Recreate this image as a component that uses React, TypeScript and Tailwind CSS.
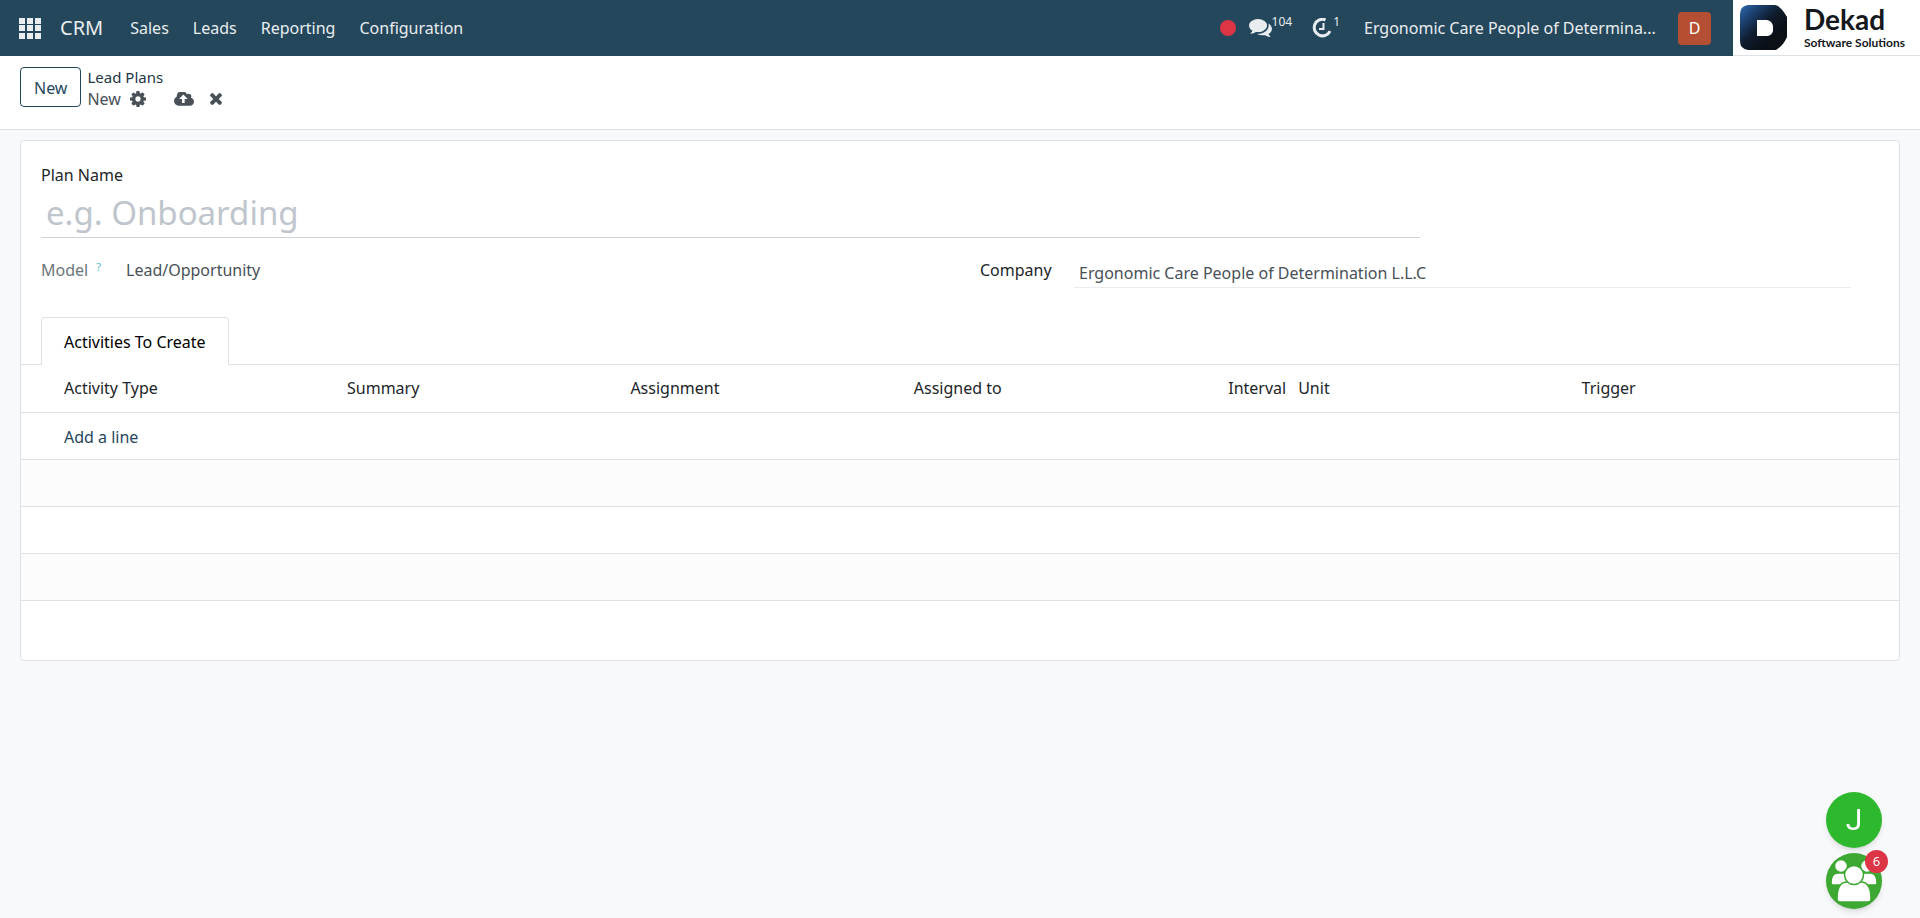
import { useState } from 'react';

const navItems = ['Sales', 'Leads', 'Reporting', 'Configuration'];

const GridIcon = () => (
  <svg viewBox="0 0 22 21" className="w-[22px] h-[21px]" fill="currentColor" aria-hidden="true">
    {[0, 8, 16].map((x) => [0, 7, 15].map((y) => <rect key={`${x}-${y}`} x={x} y={y} width="6" height="6" />))}
  </svg>
);

const CogIcon = () => (
  <svg viewBox="128 128 1536 1536" className="size-4" fill="currentColor" aria-hidden="true">
    <path d="M1152 896q0-106-75-181t-181-75-181 75-75 181 75 181 181 75 181-75 75-181zm512-109v222q0 12-8 23t-20 13l-185 28q-19 54-39 91 35 50 107 138 10 12 10 25t-9 23q-27 37-99 108t-94 71q-12 0-26-9l-138-108q-44 23-91 38-16 136-29 186-7 28-36 28h-222q-14 0-24.5-8.5t-11.5-21.5l-28-184q-49-16-90-37l-141 107q-10 9-25 9-14 0-25-11-126-114-165-168-7-10-7-23 0-12 8-23 15-21 51-66.5t54-70.5q-27-50-41-99l-183-27q-13-2-21-12.5t-8-23.5v-222q0-12 8-23t19-13l186-28q14-46 39-92-40-57-107-138-10-12-10-24 0-10 9-23 26-36 98.5-107.5t94.5-71.5q13 0 26 10l138 107q44-23 91-38 16-136 29-186 7-28 36-28h222q14 0 24.5 8.5t11.5 21.5l28 184q49 16 90 37l142-107q9-9 24-9 13 0 25 10 129 119 165 170 7 8 7 22 0 12-8 23-15 21-51 66.5t-54 70.5q26 50 41 98l183 28q13 2 21 12.5t8 23.5z" />
  </svg>
);

const CloudIcon = () => (
  <svg viewBox="-64 256 1920 1280" className="w-5 h-[14px]" fill="currentColor" aria-hidden="true">
    <path d="M1216 864q0-14-9-23l-352-352q-9-9-23-9t-23 9l-351 351q-10 12-10 24 0 14 9 23t23 9h224v352q0 13 9.500 22.500t22.500 9.500h192q13 0 22.500-9.500t9.500-22.500v-352h224q13 0 22.500-9.500t9.500-22.500zm640 288q0 159-112.500 271.500t-271.500 112.500h-1088q-185 0-316.500-131.500t-131.500-316.500q0-130 70-240t188-165q-2-30-2-43 0-212 150-362t362-150q156 0 285.500 87t188.500 231q71-62 166-62 106 0 181 75t75 181q0 76-41 138 130 31 213.500 135.500t83.500 238.500z" />
  </svg>
);

const TimesIcon = () => (
  <svg viewBox="302 366 1188 1188" className="size-3" fill="currentColor" aria-hidden="true">
    <path d="M1490 1322q0 40-28 68l-136 136q-28 28-68 28t-68-28l-294-294-294 294q-28 28-68 28t-68-28l-136-136q-28-28-28-68t28-68l294-294-294-294q-28-28-28-68t28-68l136-136q28-28 68-28t68 28l294 294 294-294q28-28 68-28t68 28l136 136q28 28 28 68t-28 68l-294 294 294 294q28 28 28 68z" />
  </svg>
);

const CommentsIcon = () => (
  <svg viewBox="0 256 1792 1408" className="w-[23px] h-[18px]" fill="currentColor" aria-hidden="true">
    <path d="M1408 768q0 139-94 257t-256.500 186.500-353.500 68.500q-86 0-176-16-124 88-278 128-36 9-86 16h-3q-11 0-20.500-8t-11.500-21q-1-3-1-6.500t.5-6.500 2-6l2.500-5 3.500-5.500 4-5 4.500-5 4-4.500q5-6 23-25t26-29.500 22.500-29 25-38.500 20.500-44q-124-72-195-177t-71-224q0-139 94-257t256.500-186.500 353.500-68.500 353.500 68.500 256.500 186.500 94 257zm384 256q0 120-71 224.500t-195 176.500q10 24 20.500 44t25 38.500 22.500 29 26 29.500 23 25q1 1 4 4.500t4.500 5 4 5 3.500 5.500l2.500 5 2 6 .5 6.500-1 6.500q-3 14-13 22t-22 7q-50-7-86-16-154-40-278-128-90 16-176 16-271 0-472-132 58 4 88 4 161 0 309-45t264-129q125-92 192-212t67-254q0-77-23-152 129 71 204 178t75 230z" />
  </svg>
);

const ClockIcon = () => (
  <svg viewBox="0 0 20 20" className="size-5" fill="none" stroke="currentColor" aria-hidden="true">
    <path d="M13.500 1.800A8.300 8.300 0 1 0 18 13.200" strokeWidth="3" />
    <path d="M11.500 5v6H7" strokeWidth="2" />
  </svg>
);

const DekadMark = () => (
  <svg viewBox="0 0 48 45" className="w-12 h-[45px]" aria-hidden="true">
    <defs>
      <linearGradient id="mark" x1="0" y1="0" x2="0.7" y2="0.7">
        <stop offset="0" stopColor="#2f6cb5" />
        <stop offset="0.3" stopColor="#1c4373" />
        <stop offset="0.65" stopColor="#0f1c2e" />
        <stop offset="1" stopColor="#0b1017" />
      </linearGradient>
    </defs>
    <path d="M8 0h27q6 1 12 12v20q-4 9-11 13H8q-8-1-8-9V9q0-8 8-9z" fill="url(#mark)" />
    <path d="M17 15h10q5 1 6 6v5q-1 4-5 5H17z" fill="#fff" />
  </svg>
);

const GroupIcon = () => (
  <svg viewBox="0 0 56 56" className="size-14" fill="#fff" stroke="#3da832" strokeWidth="1.500" aria-hidden="true">
    <path d="M5 30q0-10 7-10h5q6 0 6 8v4H7q-2 0-2-2z" />
    <circle cx="15" cy="13" r="6.500" />
    <path d="M51 30q0-10-7-10h-5q-6 0-6 8v4h16q2 0 2-2z" />
    <circle cx="41" cy="13" r="6.500" />
    <path d="M11 46q0-16 9-17h16q9 1 9 17 0 3-3 3H14q-3 0-3-3z" />
    <circle cx="28" cy="22" r="9.500" />
  </svg>
);

export default function App() {
  const [planName, setPlanName] = useState('');
  const [company, setCompany] = useState('Ergonomic Care People of Determination L.L.C');

  return (
    <div className="min-h-screen bg-[#f8f9fb] font-['Noto_Sans',sans-serif] text-[16px] leading-6 text-[#212529]">
      <header className="flex h-14 bg-[#25475c] text-[#e9edef]">
        <nav className="flex flex-1 items-center pl-[19px]">
          <button type="button" aria-label="Home menu" className="mr-[19px]">
            <GridIcon />
          </button>
          <a href="#" className="mr-[27px] text-[20px]">CRM</a>
          <div className="flex gap-6">
            {navItems.map((item) => (
              <a key={item} href="#">{item}</a>
            ))}
          </div>
        </nav>
        <div className="flex items-center pr-[22px]">
          <span className="size-4 rounded-full bg-[#dc3545]" />
          <button type="button" aria-label="Messages" className="ml-[13px] flex items-center">
            <CommentsIcon />
            <span className="mb-3 text-[12px] leading-4">104</span>
          </button>
          <button type="button" aria-label="Activities" className="ml-5 flex items-center">
            <ClockIcon />
            <span className="mb-3 ml-px text-[12px] leading-4">1</span>
          </button>
          <button type="button" className="ml-6 w-[299px] text-left">Ergonomic Care People of Determina...</button>
          <button type="button" aria-label="User menu" className="ml-[15px] size-[33px] rounded bg-[#b54f33] text-white">D</button>
        </div>
        <div className="flex w-[187px] items-center gap-4 border-b border-[#dee2e6] bg-white pl-[7px] text-[#15181c]">
          <DekadMark />
          <div className="pb-1 whitespace-nowrap font-['Lato',sans-serif]">
            <div className="text-[28px] leading-[34px] font-bold">Dekad</div>
            <div className="text-[12px] leading-[14px] font-bold">Software Solutions</div>
          </div>
        </div>
      </header>

      <div className="flex h-[74px] items-start gap-[6px] border-b border-[#dee2e6] bg-white px-5 pt-[11px]">
        <button type="button" className="h-10 rounded border border-[#25475c] px-[13px] pt-0.5 text-[#25475c]">New</button>
        <div>
          <a href="#" className="block text-[15px] leading-5 text-[#1d3749]">Lead Plans</a>
          <div className="flex h-6 items-center text-[#495057]">
            <span>New</span>
            <button type="button" aria-label="Actions" className="ml-[9px]"><CogIcon /></button>
            <button type="button" aria-label="Save" className="ml-7"><CloudIcon /></button>
            <button type="button" aria-label="Discard" className="ml-4"><TimesIcon /></button>
          </div>
        </div>
      </div>

      <main className="px-5 pt-[10px] pb-10">
        <div className="rounded border border-[#dee2e6] bg-white pb-[13px]">
          <div className="px-5 pt-[22px]">
            <label htmlFor="plan-name" className="block">Plan Name</label>
            <input
              id="plan-name"
              value={planName}
              onChange={(e) => setPlanName(e.target.value)}
              placeholder="e.g. Onboarding"
              className="block h-[51px] w-3/4 border-b border-[#ced4da] px-[5px] text-[33px] outline-none placeholder:text-[#bfc5cc]"
            />

            <div className="mt-4 grid grid-cols-2 gap-10">
              <div className="flex pt-1">
                <span className="w-[85px] text-[#6c757d]">
                  Model <sup className="ml-1 text-[11px] text-[#5bc0d0]">?</sup>
                </span>
                <span className="text-[#495057]">Lead/Opportunity</span>
              </div>
              <div className="flex pr-7">
                <label htmlFor="company" className="w-[94px] pt-1">Company</label>
                <input
                  id="company"
                  value={company}
                  onChange={(e) => setCompany(e.target.value)}
                  className="h-[34px] min-w-0 flex-1 border-b border-[#e9ecef] px-[5px] pt-1 text-[#495057] outline-none"
                />
              </div>
            </div>
          </div>

          <div role="tablist" className="mt-[29px] flex border-b border-[#dee2e6] px-5">
            <button
              type="button"
              role="tab"
              aria-selected="true"
              className="-mb-px h-12 rounded-t border border-b-0 border-[#dee2e6] bg-white px-[22px] text-black"
            >
              Activities To Create
            </button>
          </div>

          <table className="w-full table-fixed border-collapse text-left">
            <colgroup>
              <col className="w-[320px]" />
              <col />
              <col />
              <col />
              <col className="w-[101px]" />
              <col />
              <col />
              <col className="w-[40px]" />
            </colgroup>
            <thead>
              <tr className="h-[47px] border-b border-[#dee2e6]">
                <th className="pl-[43px] font-normal">Activity Type</th>
                <th className="px-[6px] font-normal">Summary</th>
                <th className="px-[6px] font-normal">Assignment</th>
                <th className="px-[6px] font-normal">Assigned to</th>
                <th className="px-[6px] text-right font-normal">Interval</th>
                <th className="px-[6px] font-normal">Unit</th>
                <th className="px-[6px] font-normal">Trigger</th>
                <th />
              </tr>
            </thead>
            <tbody>
              <tr className="h-[47px] border-b border-[#dee2e6]">
                <td colSpan={8} className="pt-0.5 pl-[43px]">
                  <a href="#" className="text-[#25475c]">Add a line</a>
                </td>
              </tr>
              <tr className="h-[47px] border-b border-[#dee2e6] bg-[#fcfcfc]"><td colSpan={8} /></tr>
              <tr className="h-[47px] border-b border-[#dee2e6]"><td colSpan={8} /></tr>
              <tr className="h-[47px] border-b border-[#dee2e6] bg-[#fcfcfc]"><td colSpan={8} /></tr>
              <tr className="h-[47px]"><td colSpan={8} /></tr>
            </tbody>
          </table>
        </div>
      </main>

      {/* chat bubbles */}
      <div className="fixed right-[38px] bottom-[9px] flex flex-col gap-[5px]">
        <button type="button" aria-label="Chat with J" className="size-14 rounded-full bg-[#2eb82e] font-['Roboto',sans-serif] text-[30px] text-white shadow-md">J</button>
        <button type="button" aria-label="Group chat" className="relative size-14 rounded-full bg-[#3da832] shadow-md">
          <GroupIcon />
          <span className="absolute -top-[3px] -right-[6px] size-[23px] rounded-full bg-[#dc3545] text-[13px] leading-[23px] text-white">6</span>
        </button>
      </div>
    </div>
  );
}
